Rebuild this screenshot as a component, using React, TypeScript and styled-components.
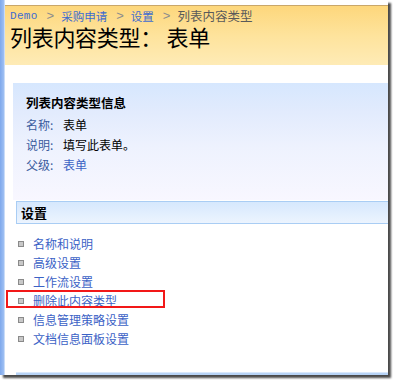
import styled, { createGlobalStyle } from "styled-components";

const GlobalStyle = createGlobalStyle`
    html, body {
        margin: 0;
        padding: 0;
        background: #ffffff;
    }
    body {
        font-family: "Noto Sans CJK SC", "DejaVu Sans", sans-serif;
        font-size: 12px;
        width: 393px;
        height: 380px;
        overflow: hidden;
    }
`;

const Frame = styled.div`
    display: flex;
    width: 388px;
    height: 375px;
    background: #ffffff;
    box-shadow: 3px 3px 2px #4a4a4a;
    overflow: hidden;
`;

const SideStrip = styled.div`
    width: 4px;
    flex-shrink: 0;
    background: linear-gradient(to right, #7ea8ec, #9fc0f3);
    border-right: 1px solid #c9dcf8;
`;

const Main = styled.div`
    flex: 1;
    display: flex;
    flex-direction: column;
    padding-top: 5px;
`;

const TitleArea = styled.header`
    height: 60px;
    padding: 2px 0 0 5px;
    box-sizing: border-box;
    border-top: 1px solid #c9a76a;
    background: linear-gradient(to bottom, #fdd77c, #fee39c 50%, #feebb6);
`;

const Crumbs = styled.div`
    display: flex;
    align-items: center;
    height: 16px;
    line-height: 16px;
    font-size: 12px;
`;

const Crumb = styled.span<{ $mono?: boolean; $current?: boolean }>`
    color: ${(p) => (p.$current ? "#5a5a5a" : "#3d6bd0")};
    font-family: ${(p) =>
        p.$mono ? `"Liberation Mono", monospace` : `"Noto Sans CJK SC", sans-serif`};
    font-size: ${(p) => (p.$mono ? "11px" : p.$current ? "12.5px" : "11.5px")};
    letter-spacing: ${(p) => (p.$mono ? "0.3px" : "0")};
    line-height: 16px;
`;

const Sep = styled.span`
    color: #8c8c8c;
    font-family: "Liberation Sans", sans-serif;
    font-size: 13px;
    line-height: 16px;
    margin: 0 7px 0 9px;
`;

const PageTitle = styled.h1`
    margin: 0;
    font-size: 22px;
    font-weight: 400;
    line-height: 24px;
    color: #000000;
    letter-spacing: -0.3px;
`;

const InfoPanel = styled.section`
    margin: 18px 0 0 8px;
    height: 117px;
    padding: 11px 0 0 13px;
    box-sizing: border-box;
    background: linear-gradient(
        to bottom,
        #d6e7fe 0%,
        #e2ebfd 25%,
        #eef2fe 55%,
        #f8f7ff 100%
    );
`;

const InfoTitle = styled.h2`
    margin: 0 0 3px;
    font-size: 12.5px;
    font-weight: 700;
    line-height: 18px;
    color: #000000;
`;

const InfoRow = styled.div`
    display: grid;
    grid-template-columns: 37px auto;
    line-height: 20px;
`;

const InfoLabel = styled.span`
    color: #3b5c9e;
`;

const InfoValue = styled.span<{ $link?: boolean }>`
    color: ${(p) => (p.$link ? "#3d63c4" : "#000000")};
`;

const SectionHead = styled.div`
    margin: 1px 0 0 11px;
    height: 23px;
    box-sizing: border-box;
    padding-left: 4px;
    display: flex;
    align-items: center;
    border: 1px solid #a9cdf4;
    border-right: none;
    background: linear-gradient(to bottom, #d6e8fd, #ecf4fe);
    font-size: 13px;
    font-weight: 700;
    color: #000000;
`;

const LinkList = styled.ul`
    list-style: none;
    margin: 10px 0 0;
    padding: 0 0 0 13px;
    flex: 1;
`;

const LinkItem = styled.li<{ $marked?: boolean }>`
    position: relative;
    display: flex;
    align-items: center;
    gap: 9px;
    height: 19px;
    color: #3b62c6;
    font-size: 12px;

    &::after {
        content: "";
        display: ${(p) => (p.$marked ? "block" : "none")};
        position: absolute;
        left: -12px;
        top: -1px;
        width: 155px;
        height: 14px;
        border: 2px solid #f21818;
    }
`;

const Bullet = styled.span`
    width: 4px;
    height: 4px;
    border: 1px solid #8a8a8a;
    background: #c8c8c8;
    flex-shrink: 0;
`;

const NextBox = styled.div`
    margin-left: 11px;
    height: 2px;
    background: #b7d3f6;
    border-top: 1px solid #d9e8fb;
`;

const links = [
    "名称和说明",
    "高级设置",
    "工作流设置",
    "删除此内容类型",
    "信息管理策略设置",
    "文档信息面板设置",
];

export default function App() {
    return (
        <>
            <GlobalStyle />
            <Frame>
                <SideStrip />
                <Main>
                    <TitleArea>
                        <Crumbs>
                            <Crumb $mono>Demo</Crumb>
                            <Sep>&gt;</Sep>
                            <Crumb>采购申请</Crumb>
                            <Sep>&gt;</Sep>
                            <Crumb>设置</Crumb>
                            <Sep>&gt;</Sep>
                            <Crumb $current>列表内容类型</Crumb>
                        </Crumbs>
                        <PageTitle>列表内容类型： 表单</PageTitle>
                    </TitleArea>

                    <InfoPanel>
                        <InfoTitle>列表内容类型信息</InfoTitle>
                        <InfoRow>
                            <InfoLabel>名称:</InfoLabel>
                            <InfoValue>表单</InfoValue>
                        </InfoRow>
                        <InfoRow>
                            <InfoLabel>说明:</InfoLabel>
                            <InfoValue>填写此表单。</InfoValue>
                        </InfoRow>
                        <InfoRow>
                            <InfoLabel>父级:</InfoLabel>
                            <InfoValue $link>表单</InfoValue>
                        </InfoRow>
                    </InfoPanel>

                    <SectionHead>设置</SectionHead>

                    <LinkList>
                        {links.map((l) => (
                            <LinkItem key={l} $marked={l === "删除此内容类型"}>
                                <Bullet />
                                {l}
                            </LinkItem>
                        ))}
                    </LinkList>

                    <NextBox />
                </Main>
            </Frame>
        </>
    );
}
